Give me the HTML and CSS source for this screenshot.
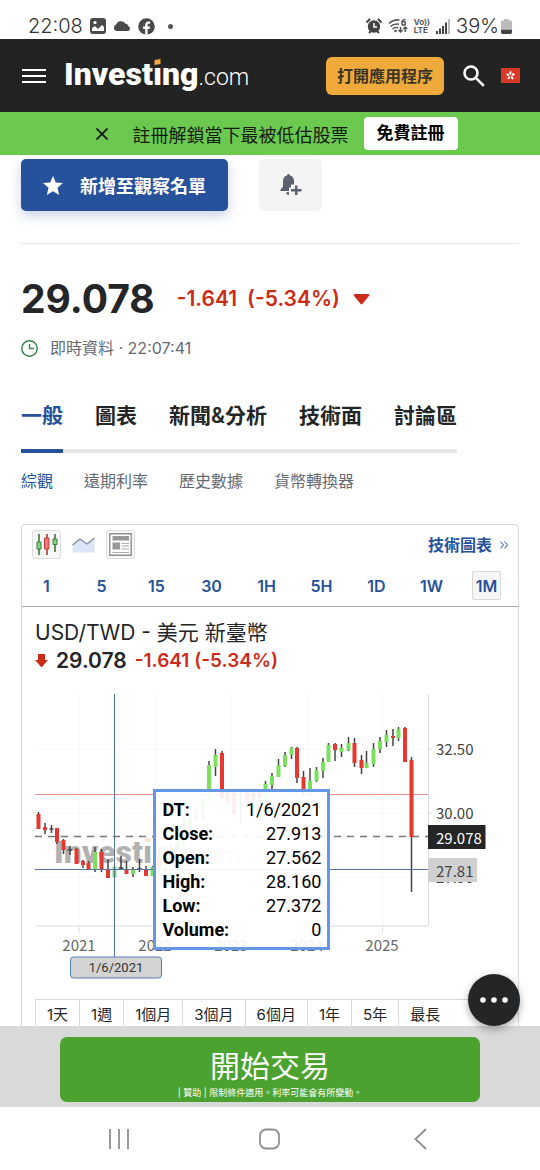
FILE: index.html
```html
<!DOCTYPE html>
<html lang="zh-Hant">
<head>
<meta charset="utf-8">
<meta name="viewport" content="width=device-width, initial-scale=1">
<title>USD/TWD - 美元 新臺幣</title>
<link rel="stylesheet" href="styles.css">
</head>
<body>
<div class="app">
  <div class="status">
    <div class="status-group">
      <span class="clock">22:08</span>
      <svg width="16" height="16" viewBox="0 0 16 16"><rect width="16" height="16" rx="3" fill="#4a4a4a"/><path d="M2 13v-3l3-2 3 3 4-4 2 2v4z" fill="#fff"/><circle cx="5" cy="4.500" r="1.600" fill="#fff"/></svg>
      <svg width="18" height="16" viewBox="0 0 18 16"><path d="M3.500 13a3.300 3.300 0 0 1-.3-6.400 5 5 0 0 1 9-1.100 4 4 0 0 1 3.300 2.800A2.500 2.500 0 0 1 15.300 13z" fill="#4a4a4a"/></svg>
      <svg width="17" height="17" viewBox="0 0 17 17"><circle cx="8.500" cy="8.500" r="8.300" fill="#4a4a4a"/><path d="M7.200 17v-6H5.100V8.600h2.100V7c0-2.300 1.200-3.500 3.300-3.500l1.600.1v2.100h-1.200c-1 0-1.300.5-1.300 1.300v1.600H12L11.600 11h-2v6z" fill="#fff"/></svg>
      <span class="more-dot"></span>
    </div>
    <div class="status-group status-right">
      <svg width="16" height="16" viewBox="0 0 16 16" fill="#444"><circle cx="8" cy="8.500" r="6.200"/><path d="M.5 4.500 4 1M15.500 4.500 12 1M3 15l2-2M13 15l-2-2" stroke="#444" stroke-width="2"/><path d="M8 5v4h3" stroke="#fff" stroke-width="1.400" fill="none"/></svg>
      <svg class="wifi" width="20" height="16" viewBox="0 0 20 16" fill="none" stroke="#555" stroke-width="1.500"><path d="M1 5.500Q5.500 1.200 11.500 2M2.500 8.500Q6 5.200 11 6.200M4.500 11Q7 8.800 10 9.700"/><path d="M17.500 1.500Q13.500 2 13.800 5.200a1.800 1.800 0 1 0 1.800-1.800q-1.400 0-1.800 1.500"/><path d="M12.500 9v5m-2-2 2 2 2-2M17.200 14V9m-2 2 2-2 2 2"/><circle cx="7.500" cy="13" r=".6"/></svg>
      <span class="volte"><span>Vo))</span><span>LTE</span></span>
      <svg width="14" height="15" viewBox="0 0 14 15" fill="#444"><path d="M0 12h2v3H0zM3 9.500h2V15H3zM6 7h2v8H6zM9 3.500h2V15H9z"/><path d="M12 0h2v15h-2z" fill="#bbb"/></svg>
      <span class="battery-text">39%</span>
      <svg class="battery" width="11" height="15" viewBox="0 0 11 15"><path d="M3 0h5v1.500h2Q11 1.500 11 3v7H0V3q0-1.500 1-1.500h2z" fill="#bbb"/><path d="M0 10.500h11V13q0 2-1.500 2h-8Q0 15 0 13z" fill="#444"/></svg>
    </div>
  </div>

  <header class="header">
    <button class="icon-button" aria-label="選單"><svg width="24" height="14" viewBox="0 0 24 14" fill="#fff"><path d="M0 0h24v2H0zM0 6h24v2H0zM0 12h24v2H0z"/></svg></button>
    <a class="logo" href="#"><b>Invest<span class="logo-i">ı<svg width="7" height="6" viewBox="0 0 7 6"><path d="M.5 1 6.500 0v5L.5 6z" fill="#f4a73b"/></svg></span>ng</b><span class="logo-com">.com</span></a>
    <button class="open-app">打開應用程序</button>
    <button class="icon-button search" aria-label="搜尋"><svg width="22" height="22" viewBox="0 0 22 22" fill="none" stroke="#fff" stroke-width="2.600"><circle cx="8" cy="8" r="6.500"/><path d="m12.800 12.800 8 8"/></svg></button>
    <button class="icon-button flag" aria-label="香港"><svg width="19" height="15" viewBox="0 0 19 15"><path fill="#d83a27" d="M0 0h19v15H0z"/><g fill="#fff" transform="translate(9.500 7.500)"><path id="petal" d="M0-.8C-2-2-1.500-4 .3-4.600 1.600-3.500 1-2 0-.8z"/><use href="#petal" transform="rotate(72)"/><use href="#petal" transform="rotate(144)"/><use href="#petal" transform="rotate(216)"/><use href="#petal" transform="rotate(288)"/></g></svg></button>
  </header>

  <div class="promo">
    <button class="icon-button" aria-label="關閉"><svg width="12" height="12" viewBox="0 0 12 12" stroke="#111" stroke-width="1.700"><path d="m.5.5 11 11M11.500.5l-11 11"/></svg></button>
    <span class="promo-text">註冊解鎖當下最被低估股票</span>
    <a class="promo-link" href="#">免費註冊</a>
  </div>

  <div class="viewport">
    <main class="page">
      <div class="actions">
        <button class="watch"><svg width="20" height="19" viewBox="0 0 20 19"><path d="m10 0 2.800 6.500 7.200.6-5.500 4.700L16.200 19 10 15.200 3.800 19l1.700-7.200L0 7.100l7.200-.6z" fill="#fff"/></svg>新增至觀察名單</button>
        <button class="alert" aria-label="新增提醒"><svg width="22" height="22" viewBox="0 0 22 22" fill="#5b616e"><path d="M8.500 0q1.400 0 1.500 1.600c3 .8 4 2.900 4 5.900v3h-3v3H9V17H.5v-1.300L3 12.500v-5c0-3 1-5.100 4-5.900Q7.100 0 8.500 0zM6 18.300h3V21q-2.600 0-3-2.700z"/><path d="M15 11.500h2.500V15H21.500v2.500h-4v3.500H15v-3.500h-4V15h4z"/></svg></button>
      </div>
      <hr class="rule">
      <div class="quote"><span class="last">29.078</span><span class="change">-1.641</span><span class="change percent">(-5.34%)</span><svg width="17" height="11" viewBox="0 0 17 11"><path d="M1.500 0h14q1.500.5.6 1.800L9.300 10q-.8.800-1.600 0L.9 1.800Q0 .5 1.500 0z" fill="#cb2c1a"/></svg></div>
      <div class="live"><svg width="17" height="17" viewBox="0 0 17 17" fill="none" stroke="#37824b" stroke-width="1.400"><circle cx="8.500" cy="8.500" r="7.700"/><path d="M8.500 4v4.500H13"/></svg><span>即時資料 · 22:07:41</span></div>

      <nav class="tabs">
        <a class="tab tab-active" href="#">一般</a><a class="tab" href="#">圖表</a><a class="tab" href="#">新聞&amp;分析</a><a class="tab" href="#">技術面</a><a class="tab" href="#">討論區</a>
      </nav>
      <nav class="subtabs">
        <a class="subtab-active" href="#">綜觀</a><a href="#">遠期利率</a><a href="#">歷史數據</a><a href="#">貨幣轉換器</a>
      </nav>

      <section class="card">
        <div class="tools">
          <button class="tool tool-on" aria-label="陰陽燭"><svg width="23" height="23" viewBox="0 0 23 23"><path d="M4 1v21M20 1v18" stroke="#356b35" stroke-width="1.500"/><path d="M12 1v21" stroke="#9c302c" stroke-width="1.500"/><path d="M2 9h4v7H2zM18 6h4v5.500h-4z" fill="#86d487" stroke="#397c3a"/><path d="M9.500 5h4.500v11H9.500z" fill="#f77472" stroke="#b8403c"/></svg></button>
          <button class="tool" aria-label="區域圖"><svg width="23" height="16" viewBox="0 0 23 16"><path d="M.5 8 8 2l7 4 7.500-5v14.500H.5z" fill="#dce5f5"/><path d="M.5 8 8 2l7 5 7.500-6" fill="none" stroke="#7f8a9d" stroke-width="1.200"/></svg></button>
          <button class="tool tool-on" aria-label="新聞"><svg width="23" height="23" viewBox="0 0 23 23"><path d="M.8.8h21.400v21.400H.8z" fill="#fff" stroke="#8e8e8e" stroke-width="1.400"/><path d="M3.500 3h16.500v4.500H3.500zM3.500 9.500h7.500v7H3.500z" fill="#989898"/><path d="M12.500 10.500H20M12.500 13H20M12.500 16H20M3.500 19.500H20" stroke="#aaa" stroke-width="1.200"/></svg></button>
          <a class="tech-link" href="#">技術圖表<svg width="8" height="8" viewBox="0 0 8 8" fill="none" stroke="#26529b"><path d="m.5.5 3 3.500-3 3.500M4.500.5l3 3.500-3 3.500"/></svg></a>
        </div>
        <div class="intervals">
          <button>1</button><button>5</button><button>15</button><button>30</button><button>1H</button><button>5H</button><button>1D</button><button>1W</button><button class="interval-on">1M</button>
        </div>
        <div class="chart-head">
          <div class="pair">USD/TWD - 美元 新臺幣</div>
          <div class="pair-quote"><svg width="13" height="14" viewBox="0 0 13 14"><path d="M3 0h7v6h3L6.500 13.500 0 6h3z" fill="#cb2c1a"/></svg><b>29.078</b><span>-1.641 (-5.34%)</span></div>
        </div>
        <div class="chart">
          <svg class="plot" viewBox="22 680 496 319">
            <path class="grid" d="M79 694v232M155 694v232M231 694v232M308 694v232M382.500 694v232M36 749h392M36 813h392M36 877h392"/>
            <path class="axis" d="M35 926h393.500V694M79 926v7M155 926v7M231 926v7M308 926v7M382.500 926v7M428 749h4M428 813h4"/>
            <g class="mark"><text class="mark-bold" x="54" y="863">Investıng</text><text class="mark-com" x="190" y="863">.com</text><path d="m145 842 6-1v-3l-6 1z" fill="#f4a73b"/></g>
            <path class="open-line" d="M35 794.500h393"/>
            <path d="M35 836.500h393" stroke="#777" stroke-width="1.500" stroke-dasharray="7 6"/>
            <path class="wicks" d="M38.500 812v17M45 823v11M51.500 825v8M49.500 829h4M57 828v16M63.500 839v15M70 846v9M67.500 850h5M76.500 848v16M83 860v8M88.500 861v9M95 847v25M101.500 849v23M108 859v19M114.500 866v12M121 856v13M118.500 868h5M126.500 861v13M133 867v10M139.500 859v13M137 869h5M146 866v10M152.500 866v10M159 848v26M165 852v20M171 845v18M178 830v18M184 818v27M190 816v18M196 807v14M203 799v20M209 761v40M215.500 749v27M222 751v48M227.500 790v14M234 790v25M240.500 791v32M247.500 791v12M253.500 790v14M259.500 789v13M265.500 781v20M272 773v16M278.500 759v18M285 752v15M291.500 747v12M297 747v36M303.500 771v24M310 768v28M316.500 767v15M323 758v20M328.500 743v19M335 743v18M341.500 744v13M348.500 737v14M354.500 738v29M361.500 755v19M366.500 751v17M373.500 743v24M380 737v16M386.500 730v17M393 729v17M398.500 727v14M405 727v35M411.500 757v135"/>
            <path class="up" d="M95 852v17M114.500 867v10M133 869v5M152.500 867v9M165 858v10M171 850v10M178 835v11M184 827v13M190 820v10M196 809v8M203 800v15M209 765v35M215.500 755v12M265.500 784v16M272 776v9M278.500 765v12M285 755v11M291.500 748v7M310 781v12M316.500 770v11M323 762v9M328.500 745v17M341.500 748v4M348.500 743v7M366.500 763v5M373.500 749v15M380 741v8M386.500 735v7M398.500 729v9"/>
            <path class="down" d="M38.500 814v15M45 827v3M57 828v14M63.500 840v10M76.500 849v15M83 861v4M88.500 863v6M101.500 852v17M108 869v9M126.500 869v5M146 869v7M159 858v12M222 753v45M227.500 792v10M234 793v21M247.500 793v8M253.500 793v7M259.500 792v6M297 748v30M303.500 777v16M335 744v6M354.500 743v20M361.500 760v8M393 736v2M405 728v34M411.500 760v77"/>
            <path class="cursor" d="M114.500 694v263M35 869.500h393"/>
            <g class="years"><text x="79" y="951">2021</text><text x="155" y="951">2022</text><text x="231" y="951">2023</text><text x="307" y="951">2024</text><text x="382" y="951">2025</text></g>
            <g class="prices"><text x="436" y="755">32.50</text><text x="436" y="819">30.00</text><text x="436" y="883">27.50</text></g>
            <path d="M428 825h57.500v24H428z" fill="#232526"/><path d="M428 858h49v24h-49z" fill="#d0d0d0"/>
            <text class="tag tag-last" x="436" y="844">29.078</text><text class="tag" x="436" y="877">27.81</text>
            <rect x="70.500" y="957" width="91" height="21" rx="3" fill="#d3d3d3" stroke="#567fba"/>
            <text class="date" x="116" y="972">1/6/2021</text>
          </svg>
          <dl class="tip">
            <div><dt>DT:</dt><dd>1/6/2021</dd></div>
            <div><dt>Close:</dt><dd>27.913</dd></div>
            <div><dt>Open:</dt><dd>27.562</dd></div>
            <div><dt>High:</dt><dd>28.160</dd></div>
            <div><dt>Low:</dt><dd>27.372</dd></div>
            <div><dt>Volume:</dt><dd>0</dd></div>
          </dl>
        </div>
        <div class="ranges">
          <button>1天</button><button>1週</button><button>1個月</button><button>3個月</button><button>6個月</button><button>1年</button><button>5年</button><button>最長</button>
        </div>
      </section>
    </main>
    <button class="fab" aria-label="更多"><svg width="28" height="6" viewBox="0 0 28 6" fill="#fff"><circle cx="3" cy="3" r="2.800"/><circle cx="14" cy="3" r="2.800"/><circle cx="25" cy="3" r="2.800"/></svg></button>
  </div>

  <aside class="ad"><a class="trade" href="#"><span class="trade-title">開始交易</span><span class="trade-note">| 贊助 | 限制條件適用。利率可能會有所變動。</span></a></aside>

  <nav class="system">
    <button aria-label="最近"><svg width="22" height="22" viewBox="0 0 22 22" stroke="#8f8f8f" stroke-width="1.800"><path d="M2 1v20M11 1v20M20 1v20"/></svg></button>
    <button aria-label="主畫面"><svg width="22" height="22" viewBox="0 0 22 22" fill="none" stroke="#8f8f8f" stroke-width="1.800"><rect x="1" y="1.500" width="19" height="19" rx="6"/></svg></button>
    <button aria-label="返回"><svg width="22" height="22" viewBox="0 0 22 22" fill="none" stroke="#8f8f8f" stroke-width="1.800"><path d="M16 1 5.500 11 16 21"/></svg></button>
  </nav>
</div>
</body>
</html>
```

FILE: styles.css
```css
* { box-sizing: border-box; }
body { margin: 0; background: #fff; color: #232526; font-family: Inter, "Noto Sans CJK TC", sans-serif; }
button { border: 0; padding: 0; background: none; color: inherit; font: inherit; }
a { color: inherit; text-decoration: none; }
svg { display: block; flex: none; }

.app { display: flex; flex-direction: column; height: 100vh; }

.status { display: flex; justify-content: space-between; height: 39px; padding: 13px 28px 0; color: #555; font-size: 19px; line-height: 26px; flex: none; }
.status-group { display: flex; align-items: center; gap: 7px; }
.status-right { gap: 6px; }
.clock { font-weight: 300; color: #333; font-size: 20px; }
.battery-text { font-weight: 300; color: #333; font-size: 20px; }
.battery { margin-left: -4px; }
.more-dot { width: 5px; height: 5px; margin-left: 6px; border-radius: 50%; background: #555; }
.volte { display: flex; flex-direction: column; font-size: 8px; line-height: 8px; font-weight: 700; }

.header { display: flex; align-items: center; height: 73px; padding: 0 20px 0 22px; background: #232323; color: #fff; flex: none; }
.icon-button { display: flex; }
.logo { display: flex; align-items: baseline; margin-left: 18px; font-family: Roboto, sans-serif; font-size: 32px; line-height: 40px; }
.logo b { font-weight: 900; }
.logo-i { position: relative; }
.logo-i svg { position: absolute; left: 1px; top: 4px; }
.logo-com { font-size: 23px; font-weight: 300; }
.open-app { margin-left: auto; padding: 0 11px; border-radius: 6px; background: #f0a93b; color: #3a3528; font-size: 16px; font-weight: 700; line-height: 38px; }
.search { margin-left: 19px; }
.flag { margin-left: 16px; }

.promo { display: flex; align-items: center; justify-content: center; height: 43px; padding: 0 15px 0 28px; background: #6bc950; color: #151b12; flex: none; }
.promo-text { margin: 0 15px 0 25px; font-size: 18px; }
.promo-link { padding: 0 13px; border-radius: 4px; background: #fff; color: #000; font-size: 17px; font-weight: 700; line-height: 33px; }

.viewport { position: relative; flex: 1; min-height: 0; }
.page { height: 100%; padding: 4px 21px 0; overflow: hidden; }
.actions { display: flex; gap: 31px; }
.watch { display: flex; align-items: center; gap: 17px; height: 52px; padding: 0 22px; border-radius: 5px; background: #26529b; color: #fff; font-size: 18px; font-weight: 700; box-shadow: 0 5px 12px #26529b40; }
.alert { display: flex; align-items: center; justify-content: center; width: 63px; height: 52px; border-radius: 5px; background: #f4f4f4; }
.rule { height: 1px; margin: 32px 0 0; border: 0; background: #e3e5e8; }
.quote { display: flex; align-items: center; margin-top: 31px; line-height: 48px; }
.last { font-size: 39px; font-weight: 700; }
.change { margin-left: 22px; color: #cb2c1a; font-size: 21px; font-weight: 600; }
.percent { margin: 0 13px 0 10px; }
.live { display: flex; align-items: center; gap: 12px; margin-top: 13px; color: #646b74; font-size: 16px; line-height: 24px; }

.tabs { display: flex; gap: 32px; width: max-content; margin-top: 40px; box-shadow: inset 0 -4px #e6e6e6; font-size: 21px; font-weight: 600; line-height: 32px; }
.tab { padding-bottom: 17px; border-bottom: 4px solid transparent; }
.tab-active { border-color: #26529b; color: #26529b; }
.subtabs { display: flex; gap: 31px; margin-top: 16px; color: #646b74; font-size: 16px; line-height: 24px; }
.subtab-active { color: #26529b; }

.card { margin-top: 31px; border: 1px solid #d8d8d8; border-radius: 4px; }
.tools { display: flex; gap: 8px; padding: 5px 10px 0; }
.tool { display: flex; align-items: center; justify-content: center; width: 29px; height: 29px; border: 1px solid transparent; border-radius: 3px; }
.tool-on { border-color: #dcdcdc; background: #f8f8f8; }
.tech-link { display: flex; align-items: center; gap: 8px; margin-left: auto; color: #26529b; font-size: 16px; line-height: 24px; font-weight: 600; }
.intervals { display: flex; justify-content: space-between; padding: 12px 17px 6px 10px; border-bottom: 1px solid #aaa; color: #26529b; font-size: 16px; font-weight: 600; }
.intervals button { width: 29px; height: 29px; border: 1px solid transparent; border-radius: 2px; white-space: nowrap; }
.intervals .interval-on { border-color: #d8d8d8; background: #f6f6f6; }
.chart-head { padding: 12px 13px 5px; line-height: 28px; }
.pair { font-size: 21px; }
.pair-quote { display: flex; align-items: center; gap: 8px; font-size: 21px; }
.pair-quote span { color: #cb2c1a; font-size: 19px; font-weight: 600; }
.pair-quote b { font-weight: 600; }

.chart { position: relative; }
.plot { width: 100%; height: auto; font-family: "Noto Sans CJK TC", sans-serif; font-size: 15px; }
.grid { stroke: #f7f7f7; }
.axis { fill: none; stroke: #dcdce4; }
.mark { opacity: .3; font-family: Roboto, sans-serif; }
.mark-bold { font-size: 32px; font-weight: 900; }
.mark-com { font-size: 23px; font-weight: 300; }
.open-line { stroke: #f08c88; }
.wicks { stroke: #444; stroke-width: 1.500; }
.up { stroke: #7be05c; stroke-width: 4; }
.down { stroke: #e5392f; stroke-width: 4; }
.cursor { stroke: #54749f; }
.years { fill: #666; text-anchor: middle; }
.prices, .tag { fill: #444; }
.tag-last { fill: #fff; }
.date { fill: #333; font-family: Roboto, sans-serif; font-size: 13px; text-anchor: middle; }
.tip { position: absolute; left: 26.5%; top: 34.1%; width: 177px; margin: 0; padding: 6px 6px 5px; border: 3px solid #6497e8; background: #ffffffeb; color: #000; font-family: Roboto, sans-serif; font-size: 18px; line-height: 24px; }
.tip div { display: flex; justify-content: space-between; }
.tip dt { font-weight: 700; }
.tip dd { margin: 0; }

.ranges { display: flex; margin: 0 12px 0 13px; border: 1px solid #d8d8d8; font-size: 15px; line-height: 30px; }
.ranges button { padding: 0 11px; border-right: 1px solid #d8d8d8; white-space: nowrap; }
.ranges button:last-child { flex: 1; border: 0; text-align: left; }

.fab { position: absolute; right: 20px; bottom: 0; display: flex; align-items: center; justify-content: center; width: 52px; height: 52px; border-radius: 50%; background: #232526; box-shadow: 0 3px 9px #0005; z-index: 1; }

.ad { padding: 11px 60px 5px; background: #d9d9d9; flex: none; }
.trade { display: flex; flex-direction: column; align-items: center; height: 65px; padding-top: 9px; border-radius: 7px; background: #4ba22e; color: #fff; }
.trade-title { font-size: 30px; line-height: 40px; }
.trade-note { font-size: 9px; line-height: 14px; }

.system { display: grid; grid-template-columns: repeat(3, 1fr); height: 63px; padding: 0 43px; flex: none; }
.system button { display: flex; align-items: center; justify-content: center; }
```
